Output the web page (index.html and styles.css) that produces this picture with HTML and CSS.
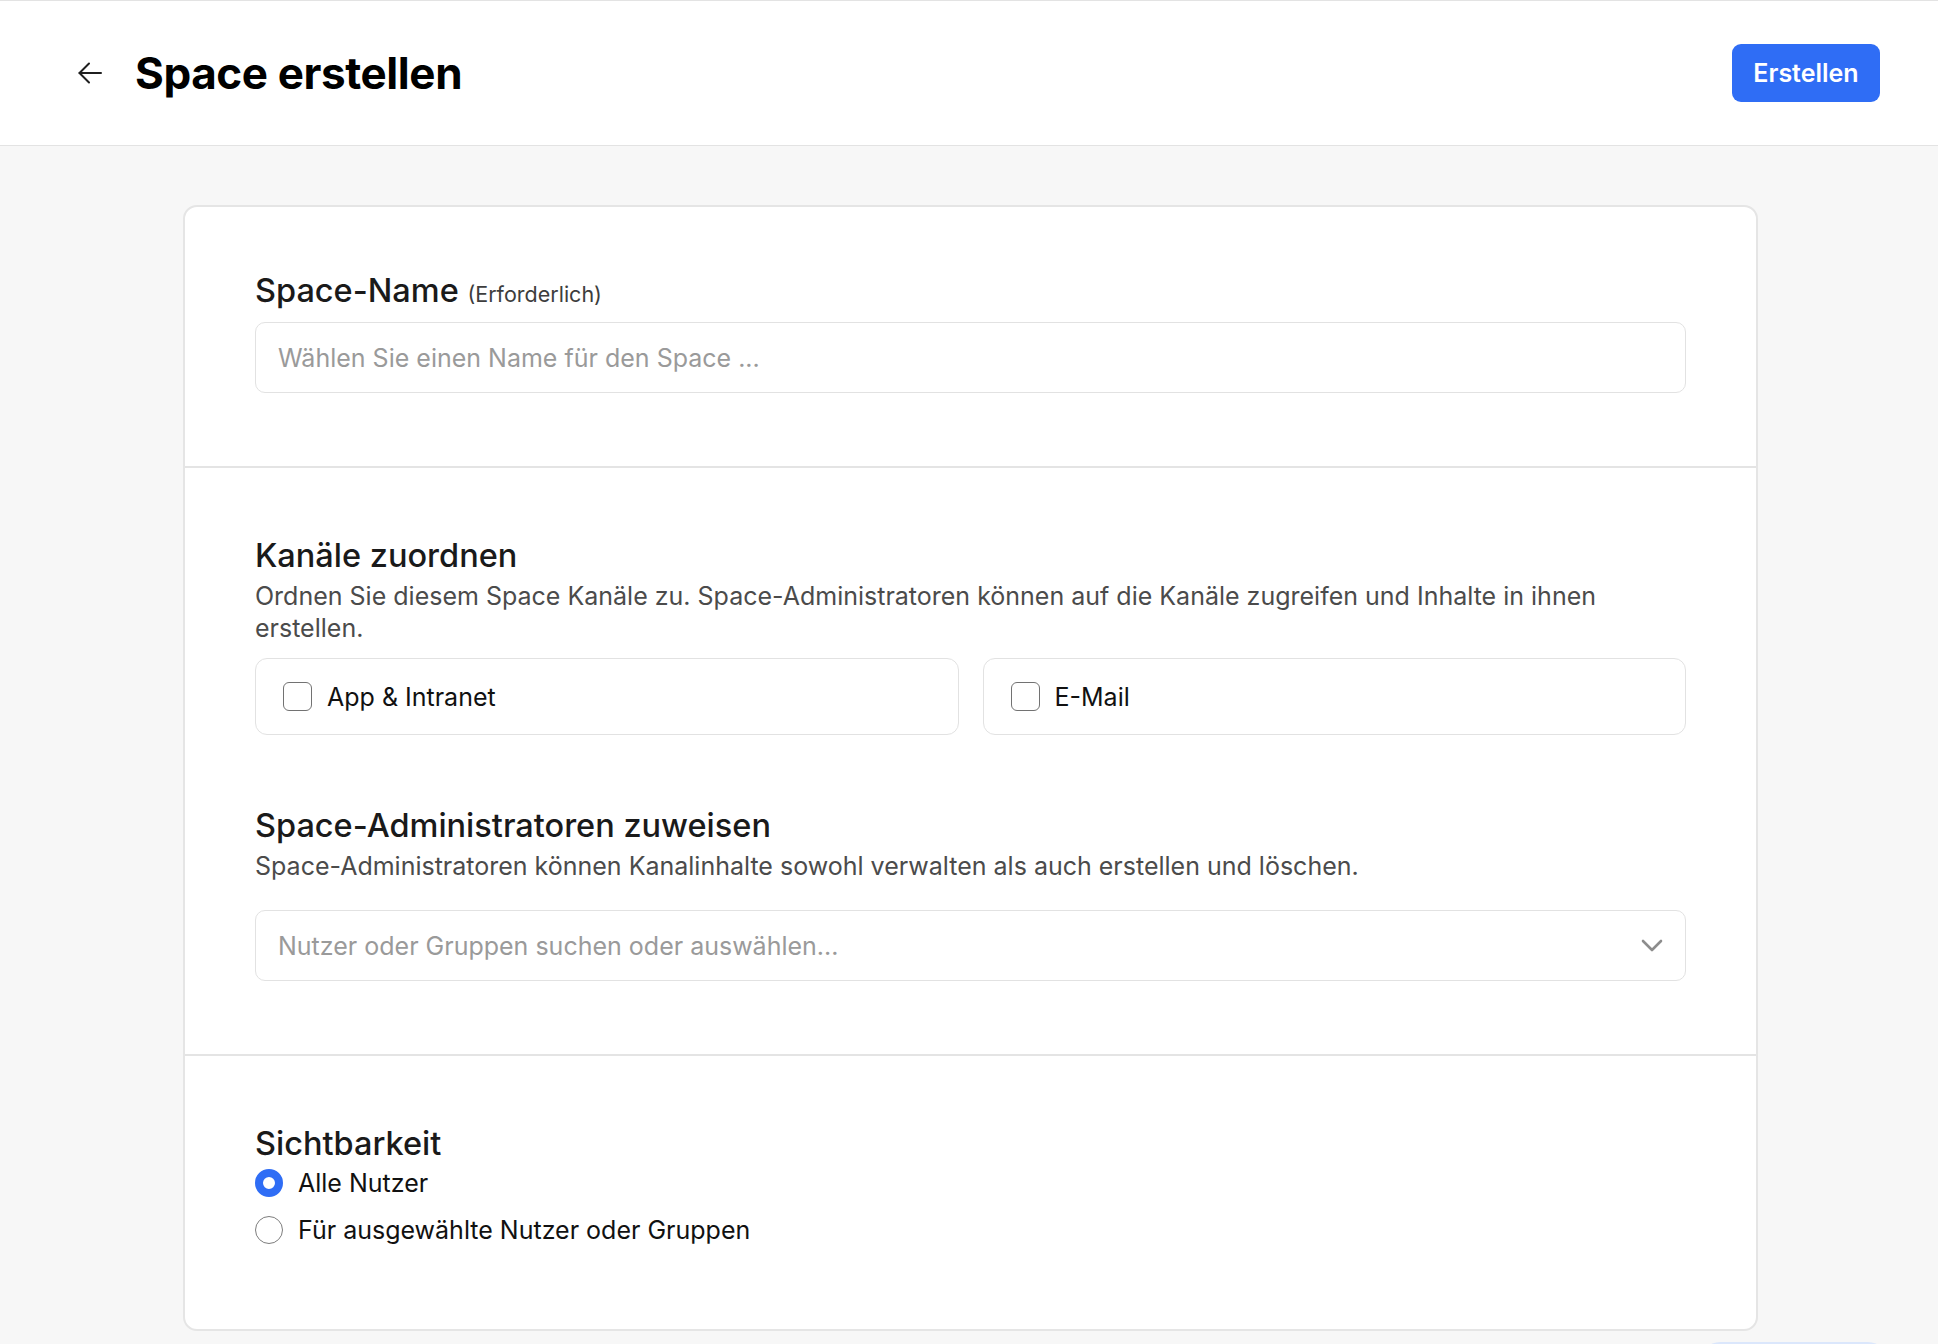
FILE: index.html
```html
<!DOCTYPE html>
<html lang="de">
<head>
<meta charset="utf-8">
<title>Space erstellen</title>
<link rel="stylesheet" href="styles.css">
</head>
<body>
<header class="topbar">
  <div class="topbar-left">
    <button class="back" aria-label="Zurück">
      <svg width="24" height="22" viewBox="0 0 24 22" fill="none" stroke="#1f1f1f" stroke-width="2" stroke-linecap="round" stroke-linejoin="round"><path d="M23 11H1.5"/><path d="M11 1.5L1.5 11L11 20.5"/></svg>
    </button>
    <h1 class="title">Space erstellen</h1>
  </div>
  <button class="primary">Erstellen</button>
</header>

<main class="main">
  <div class="card">
    <section class="section section-first">
      <h2 class="heading">Space-Name <span class="req">(Erforderlich)</span></h2>
      <div class="field">
        <span class="placeholder">Wählen Sie einen Name für den Space ...</span>
      </div>
    </section>

    <section class="section">
      <div class="group">
        <h2 class="heading">Kanäle zuordnen</h2>
        <p class="desc">Ordnen Sie diesem Space Kanäle zu. Space-Administratoren können auf die Kanäle zugreifen und Inhalte in ihnen erstellen.</p>
        <div class="channels">
          <label class="channel"><span class="checkbox"></span><span class="label">App &amp; Intranet</span></label>
          <label class="channel"><span class="checkbox"></span><span class="label">E-Mail</span></label>
        </div>
      </div>
      <div class="group group-admins">
        <h2 class="heading">Space-Administratoren zuweisen</h2>
        <p class="desc">Space-Administratoren können Kanalinhalte sowohl verwalten als auch erstellen und löschen.</p>
        <div class="field field-select">
          <span class="placeholder">Nutzer oder Gruppen suchen oder auswählen...</span>
          <svg class="chevron" width="22" height="13" viewBox="0 0 22 13" fill="none" stroke="#8d8d8d" stroke-width="2.6" stroke-linecap="round" stroke-linejoin="round"><path d="M2 2L11 11L20 2"/></svg>
        </div>
      </div>
    </section>

    <section class="section section-last">
      <h2 class="heading">Sichtbarkeit</h2>
      <div class="radios">
        <label class="radio-row"><span class="radio radio-on"></span><span class="label">Alle Nutzer</span></label>
        <label class="radio-row"><span class="radio"></span><span class="label">Für ausgewählte Nutzer oder Gruppen</span></label>
      </div>
    </section>
  </div>
</main>
<div class="floating"></div>
</body>
</html>
```

FILE: styles.css
```css
* { box-sizing: border-box; }

html, body {
  margin: 0;
  padding: 0;
}

body {
  font-family: Inter, "Noto Sans", "Liberation Sans", sans-serif;
  background: #f7f7f7;
  color: #111;
  height: 1344px;
  overflow: hidden;
  position: relative;
}

.topbar {
  height: 146px;
  background: #fff;
  border-top: 1px solid #e3e3e3;
  border-bottom: 1px solid #e3e3e3;
  display: flex;
  align-items: center;
  justify-content: space-between;
  padding: 0 58px 0 78px;
}

.topbar-left {
  display: flex;
  align-items: center;
  gap: 33px;
}

.back {
  border: 0;
  background: none;
  padding: 0;
  width: 24px;
  height: 22px;
  display: flex;
}

.title {
  margin: 0;
  font-size: 44px;
  line-height: 54px;
  font-weight: 700;
  letter-spacing: -0.4px;
  color: #000;
}

.primary {
  height: 58px;
  width: 148px;
  border: 0;
  border-radius: 9px;
  background: #2f6df5;
  color: #fff;
  font-family: inherit;
  font-size: 25px;
  font-weight: 600;
  padding: 0;
}

.main {
  padding: 59px 0 0;
}

.card {
  width: 1575px;
  margin: 0 0 0 183px;
  background: #fff;
  border: 2px solid #e5e5e5;
  border-radius: 14px;
}

.section {
  padding: 69px 70px 73px;
  border-top: 2px solid #e4e4e4;
}

.section-first {
  border-top: 0;
  padding-top: 65px;
}

.section-first .field {
  margin-top: 9px;
}

.section-last {
  padding-top: 69px;
  padding-bottom: 83px;
}

.heading {
  margin: 0;
  font-size: 32.5px;
  line-height: 38px;
  font-weight: 500;
  color: #1a1a1a;
}

.req {
  font-size: 21.5px;
  font-weight: 400;
  color: #3d3d3d;
}

.field {
  height: 71px;
  border: 1px solid #e2e2e2;
  border-radius: 10px;
  display: flex;
  align-items: center;
  padding: 0 22px;
}

.placeholder {
  font-size: 25px;
  color: #9a9a9a;
}

.field-select {
  margin-top: 28px;
  justify-content: space-between;
}

.desc {
  margin: 5px 0 0;
  font-size: 25px;
  line-height: 32px;
  color: #4b4b4b;
}

.channels {
  margin-top: 14px;
  display: grid;
  grid-template-columns: 1fr 1fr;
  gap: 24px;
}

.channel {
  height: 77px;
  border: 1px solid #e2e2e2;
  border-radius: 12px;
  display: flex;
  align-items: center;
  padding: 0 27px;
  gap: 15px;
}

.checkbox {
  width: 29px;
  height: 29px;
  border: 1.5px solid #727272;
  border-radius: 6px;
  flex: none;
}

.label {
  font-size: 25px;
  color: #111;
}

.group-admins {
  margin-top: 72px;
}

.radios {
  margin-top: 4px;
  display: flex;
  flex-direction: column;
  gap: 15px;
}

.radio-row {
  height: 32px;
  display: flex;
  align-items: center;
  gap: 15px;
}

.radio {
  width: 28px;
  height: 28px;
  border-radius: 50%;
  border: 1.5px solid #7d7d7d;
  background: #fff;
  flex: none;
}

.radio-on {
  border: 8.5px solid #2f6df5;
}

.floating {
  position: absolute;
  left: 1700px;
  top: 1342px;
  width: 188px;
  height: 40px;
  border-radius: 20px;
  background: #dbe7fc;
}
```
